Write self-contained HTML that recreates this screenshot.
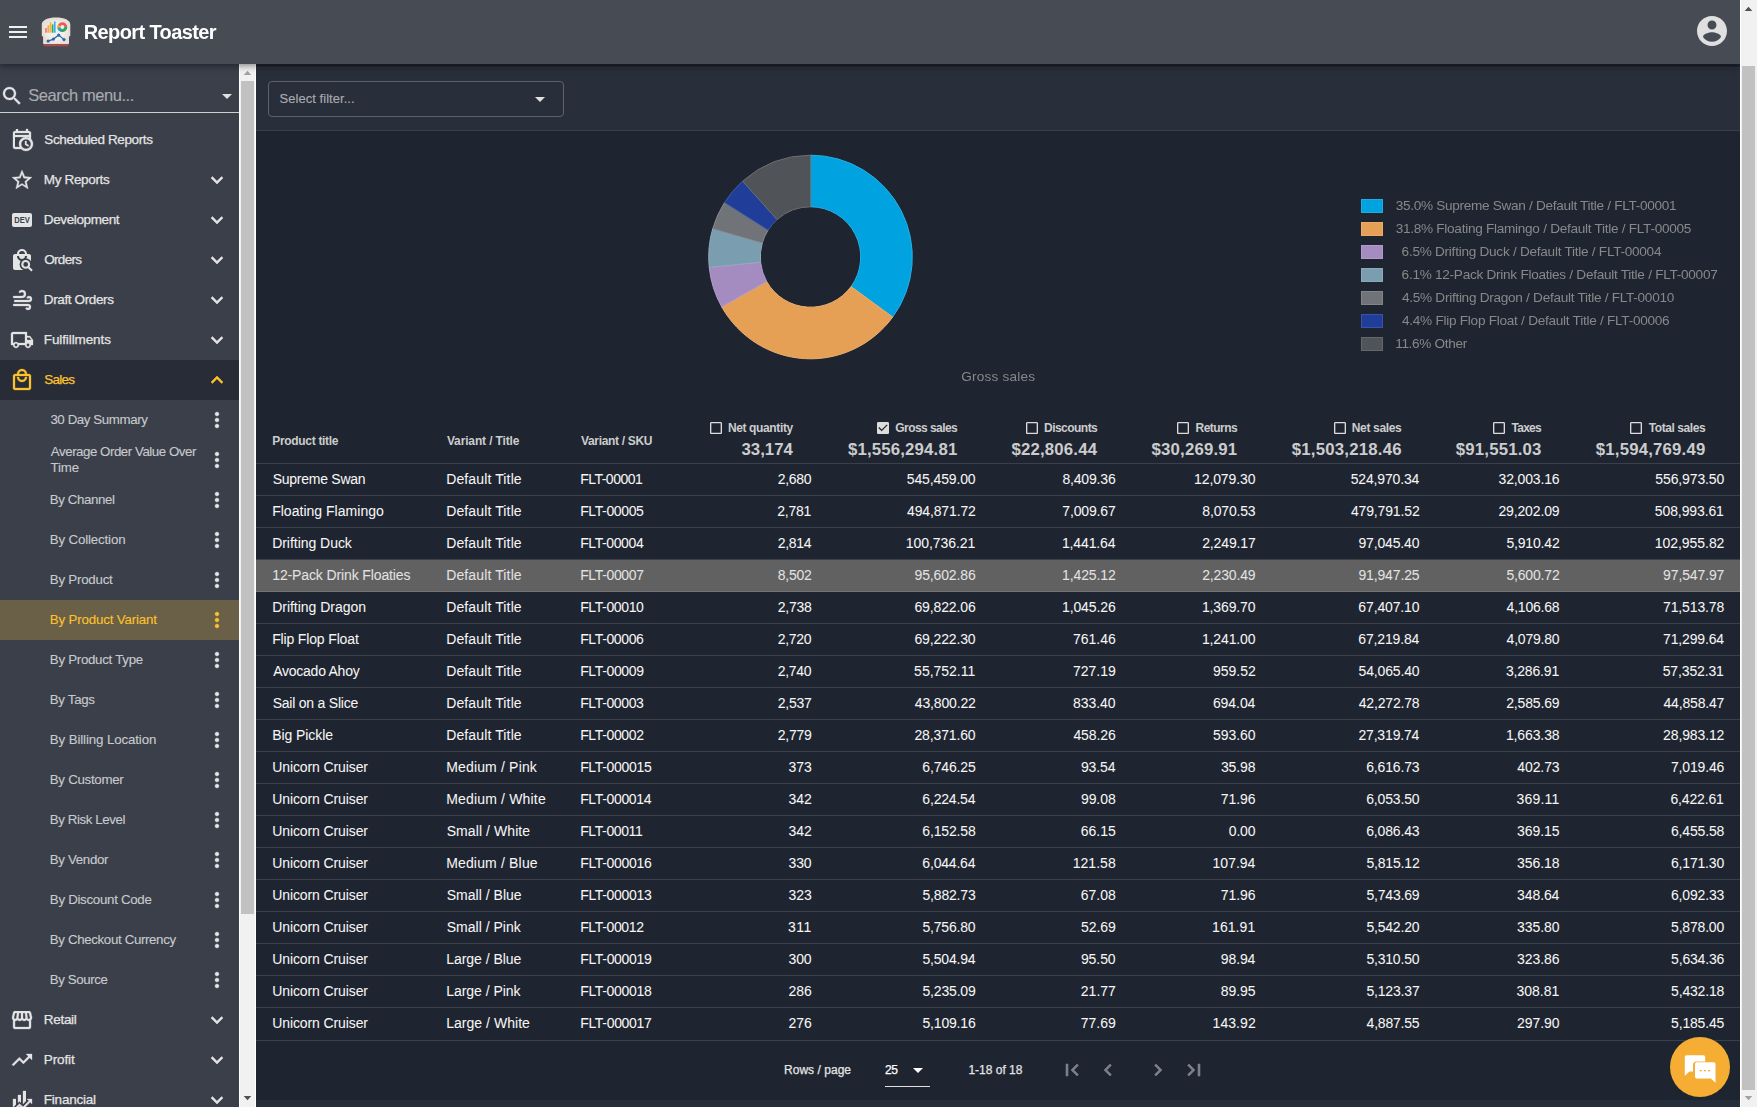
<!DOCTYPE html>
<html lang="en"><head><meta charset="utf-8"><title>Report Toaster</title>
<style>
*{box-sizing:border-box}
html,body{margin:0;padding:0}
body{width:1757px;height:1107px;overflow:hidden;background:#1f2530;font-family:"Liberation Sans",Arial,sans-serif;position:relative}
.a{position:absolute}
.ic{position:absolute;display:block;overflow:visible}
.t{position:absolute;white-space:pre;line-height:20px;-webkit-text-stroke:0.25px}
.c{-webkit-text-stroke:0.04px}
.b{-webkit-text-stroke:0}
.s{-webkit-text-stroke:0.12px}
.g{transform:translateZ(0);-webkit-text-stroke:0}
.hdr{left:0;top:0;width:1740px;height:64px;background:#474b54;box-shadow:0 2px 4px -1px rgba(0,0,0,.2),0 4px 5px 0 rgba(0,0,0,.14),0 1px 10px 0 rgba(0,0,0,.12)}
.sidebar{left:0;top:64px;width:239px;height:1043px;background:#3a3f4a;overflow:hidden}
.sbin{left:0;top:-64px;width:239px;height:1107px}
</style></head><body>
<div class="a" style="left:256px;top:67px;width:1484px;height:63px;background:#292e3b"></div>
<div class="a" style="left:256px;top:130px;width:1484px;height:1px;background:#393e49;"></div>
<div class="a" style="left:256px;top:67px;width:1484px;height:1px;background:#2e333f;"></div>
<div class="a" style="left:268px;top:81px;width:296px;height:36px;border:1px solid #5d616b;border-radius:4px"></div>
<span class="t s" style="left:279.61px;top:88.90px;font-size:13px;letter-spacing:0.037px;color:#a9abb0;">Select filter...</span>
<svg class="ic" style="left:528px;top:87px;width:24px;height:24px" viewBox="0 0 24 24"><path fill="#e0e0e0" d="M7 10l5 5 5-5z"/></svg>
<svg class="ic" style="left:700px;top:150px;width:220px;height:220px" viewBox="700 150 220 220"><path fill="#00a2e0" stroke="#28b0e4" stroke-width="1" stroke-linejoin="bevel" d="M810.50 155.20A101.8 101.8 0 0 1 892.73 317.02L851.05 286.60A50.2 50.2 0 0 0 810.50 206.80Z"/><path fill="#e5a055" stroke="#e9af70" stroke-width="1" stroke-linejoin="bevel" d="M892.73 317.02A101.8 101.8 0 0 1 721.71 306.79L766.71 281.55A50.2 50.2 0 0 0 851.05 286.60Z"/><path fill="#a58cc0" stroke="#b39eca" stroke-width="1" stroke-linejoin="bevel" d="M721.71 306.79A101.8 101.8 0 0 1 709.23 267.39L760.56 262.12A50.2 50.2 0 0 0 766.71 281.55Z"/><path fill="#7a9eb0" stroke="#8fadbc" stroke-width="1" stroke-linejoin="bevel" d="M709.23 267.39A101.8 101.8 0 0 1 712.71 228.72L762.28 243.06A50.2 50.2 0 0 0 760.56 262.12Z"/><path fill="#707478" stroke="#868a8d" stroke-width="1" stroke-linejoin="bevel" d="M712.71 228.72A101.8 101.8 0 0 1 724.49 202.54L768.09 230.14A50.2 50.2 0 0 0 762.28 243.06Z"/><path fill="#1f3d99" stroke="#425ca9" stroke-width="1" stroke-linejoin="bevel" d="M724.49 202.54A101.8 101.8 0 0 1 742.64 181.11L777.04 219.58A50.2 50.2 0 0 0 768.09 230.14Z"/><path fill="#505358" stroke="#6c6e72" stroke-width="1" stroke-linejoin="bevel" d="M742.64 181.11A101.8 101.8 0 0 1 810.50 155.20L810.50 206.80A50.2 50.2 0 0 0 777.04 219.58Z"/></svg>
<span class="t g" style="left:961.22px;top:366.60px;font-size:13.6px;letter-spacing:0.201px;color:#878889;">Gross sales</span>
<div class="a" style="left:1361.4px;top:199px;width:21.6px;height:14px;background:#00a2e0;border:1px solid rgba(255,255,255,.12)"></div><span class="t g" style="left:1395.68px;top:195.90px;font-size:13.6px;letter-spacing:-0.302px;color:#878889;">35.0% Supreme Swan / Default Title / FLT-00001</span><div class="a" style="left:1361.4px;top:222px;width:21.6px;height:14px;background:#e5a055;border:1px solid rgba(255,255,255,.12)"></div><span class="t g" style="left:1395.68px;top:218.90px;font-size:13.6px;letter-spacing:-0.278px;color:#878889;">31.8% Floating Flamingo / Default Title / FLT-00005</span><div class="a" style="left:1361.4px;top:245px;width:21.6px;height:14px;background:#a58cc0;border:1px solid rgba(255,255,255,.12)"></div><span class="t g" style="left:1401.61px;top:241.90px;font-size:13.6px;letter-spacing:-0.264px;color:#878889;">6.5% Drifting Duck / Default Title / FLT-00004</span><div class="a" style="left:1361.4px;top:268px;width:21.6px;height:14px;background:#7a9eb0;border:1px solid rgba(255,255,255,.12)"></div><span class="t g" style="left:1401.61px;top:264.90px;font-size:13.6px;letter-spacing:-0.269px;color:#878889;">6.1% 12-Pack Drink Floaties / Default Title / FLT-00007</span><div class="a" style="left:1361.4px;top:291px;width:21.6px;height:14px;background:#707478;border:1px solid rgba(255,255,255,.12)"></div><span class="t g" style="left:1401.99px;top:287.90px;font-size:13.6px;letter-spacing:-0.278px;color:#878889;">4.5% Drifting Dragon / Default Title / FLT-00010</span><div class="a" style="left:1361.4px;top:314px;width:21.6px;height:14px;background:#1f3d99;border:1px solid rgba(255,255,255,.12)"></div><span class="t g" style="left:1401.99px;top:310.90px;font-size:13.6px;letter-spacing:-0.264px;color:#878889;">4.4% Flip Flop Float / Default Title / FLT-00006</span><div class="a" style="left:1361.4px;top:337px;width:21.6px;height:14px;background:#505358;border:1px solid rgba(255,255,255,.12)"></div><span class="t g" style="left:1395.16px;top:333.90px;font-size:13.6px;letter-spacing:-0.325px;color:#878889;">11.6% Other</span>
<span class="t b" style="left:272.20px;top:431.00px;font-size:12px;letter-spacing:-0.307px;font-weight:bold;color:#cbcccd;">Product title</span><span class="t b" style="left:446.92px;top:431.00px;font-size:12px;letter-spacing:-0.141px;font-weight:bold;color:#cbcccd;">Variant / Title</span><span class="t b" style="left:580.92px;top:431.00px;font-size:12px;letter-spacing:-0.320px;font-weight:bold;color:#cbcccd;">Variant / SKU</span><svg class="ic" style="left:707.8px;top:420px;width:16px;height:16px" viewBox="0 0 24 24"><path fill="#dcdcdc" d="M19 5v14H5V5h14m0-2H5c-1.1 0-2 .9-2 2v14c0 1.1.9 2 2 2h14c1.1 0 2-.9 2-2V5c0-1.1-.9-2-2-2z"/></svg><span class="t b" style="left:727.90px;top:418.00px;font-size:12px;letter-spacing:-0.361px;font-weight:bold;color:#cbcccd;">Net quantity</span><span class="t b" style="left:741.41px;top:439.60px;font-size:16.8px;letter-spacing:0.030px;font-weight:bold;color:#cbcccd;">33,174</span><svg class="ic" style="left:874.9px;top:420px;width:16px;height:16px" viewBox="0 0 24 24"><path fill="#dcdcdc" d="M19 3H5c-1.11 0-2 .9-2 2v14c0 1.1.89 2 2 2h14c1.11 0 2-.9 2-2V5c0-1.1-.89-2-2-2zm-9 14l-5-5 1.41-1.41L10 14.17l7.59-7.59L19 8l-9 9z"/></svg><span class="t b" style="left:895.31px;top:418.00px;font-size:12px;letter-spacing:-0.566px;font-weight:bold;color:#cbcccd;">Gross sales</span><span class="t b" style="left:847.98px;top:439.60px;font-size:16.8px;letter-spacing:0.164px;font-weight:bold;color:#cbcccd;">$1,556,294.81</span><svg class="ic" style="left:1023.9px;top:420px;width:16px;height:16px" viewBox="0 0 24 24"><path fill="#dcdcdc" d="M19 5v14H5V5h14m0-2H5c-1.1 0-2 .9-2 2v14c0 1.1.9 2 2 2h14c1.1 0 2-.9 2-2V5c0-1.1-.9-2-2-2z"/></svg><span class="t b" style="left:1044.00px;top:418.00px;font-size:12px;letter-spacing:-0.527px;font-weight:bold;color:#cbcccd;">Discounts</span><span class="t b" style="left:1011.48px;top:439.60px;font-size:16.8px;letter-spacing:0.169px;font-weight:bold;color:#cbcccd;">$22,806.44</span><svg class="ic" style="left:1175.4px;top:420px;width:16px;height:16px" viewBox="0 0 24 24"><path fill="#dcdcdc" d="M19 5v14H5V5h14m0-2H5c-1.1 0-2 .9-2 2v14c0 1.1.9 2 2 2h14c1.1 0 2-.9 2-2V5c0-1.1-.9-2-2-2z"/></svg><span class="t b" style="left:1195.50px;top:418.00px;font-size:12px;letter-spacing:-0.541px;font-weight:bold;color:#cbcccd;">Returns</span><span class="t b" style="left:1151.48px;top:439.60px;font-size:16.8px;letter-spacing:0.189px;font-weight:bold;color:#cbcccd;">$30,269.91</span><svg class="ic" style="left:1331.7px;top:420px;width:16px;height:16px" viewBox="0 0 24 24"><path fill="#dcdcdc" d="M19 5v14H5V5h14m0-2H5c-1.1 0-2 .9-2 2v14c0 1.1.9 2 2 2h14c1.1 0 2-.9 2-2V5c0-1.1-.9-2-2-2z"/></svg><span class="t b" style="left:1351.80px;top:418.00px;font-size:12px;letter-spacing:-0.338px;font-weight:bold;color:#cbcccd;">Net sales</span><span class="t b" style="left:1291.78px;top:439.60px;font-size:16.8px;letter-spacing:0.201px;font-weight:bold;color:#cbcccd;">$1,503,218.46</span><svg class="ic" style="left:1490.7px;top:420px;width:16px;height:16px" viewBox="0 0 24 24"><path fill="#dcdcdc" d="M19 5v14H5V5h14m0-2H5c-1.1 0-2 .9-2 2v14c0 1.1.9 2 2 2h14c1.1 0 2-.9 2-2V5c0-1.1-.9-2-2-2z"/></svg><span class="t b" style="left:1511.47px;top:418.00px;font-size:12px;letter-spacing:-0.727px;font-weight:bold;color:#cbcccd;">Taxes</span><span class="t b" style="left:1455.78px;top:439.60px;font-size:16.8px;letter-spacing:0.182px;font-weight:bold;color:#cbcccd;">$91,551.03</span><svg class="ic" style="left:1628.1px;top:420px;width:16px;height:16px" viewBox="0 0 24 24"><path fill="#dcdcdc" d="M19 5v14H5V5h14m0-2H5c-1.1 0-2 .9-2 2v14c0 1.1.9 2 2 2h14c1.1 0 2-.9 2-2V5c0-1.1-.9-2-2-2z"/></svg><span class="t b" style="left:1648.87px;top:418.00px;font-size:12px;letter-spacing:-0.441px;font-weight:bold;color:#cbcccd;">Total sales</span><span class="t b" style="left:1595.78px;top:439.60px;font-size:16.8px;letter-spacing:0.186px;font-weight:bold;color:#cbcccd;">$1,594,769.49</span><div class="a" style="left:256px;top:463px;width:1484px;height:1px;background:rgba(255,255,255,.12);"></div><span class="t c" style="left:272.66px;top:468.60px;font-size:14px;letter-spacing:-0.252px;color:#f6f6f6;">Supreme Swan</span><span class="t c" style="left:446.15px;top:468.60px;font-size:14px;letter-spacing:0.133px;color:#f6f6f6;">Default Title</span><span class="t c" style="left:580.15px;top:468.60px;font-size:14px;letter-spacing:-0.505px;color:#f6f6f6;">FLT-00001</span><span class="t c" style="left:777.75px;top:468.60px;font-size:14px;letter-spacing:-0.285px;color:#f6f6f6;">2,680</span><span class="t c" style="left:906.76px;top:468.60px;font-size:14px;letter-spacing:-0.131px;color:#f6f6f6;">545,459.00</span><span class="t c" style="left:1062.43px;top:468.60px;font-size:14px;letter-spacing:-0.174px;color:#f6f6f6;">8,409.36</span><span class="t c" style="left:1194.01px;top:468.60px;font-size:14px;letter-spacing:-0.094px;color:#f6f6f6;">12,079.30</span><span class="t c" style="left:1350.66px;top:468.60px;font-size:14px;letter-spacing:-0.146px;color:#f6f6f6;">524,970.34</span><span class="t c" style="left:1498.55px;top:468.60px;font-size:14px;letter-spacing:-0.152px;color:#f6f6f6;">32,003.16</span><span class="t c" style="left:1655.36px;top:468.60px;font-size:14px;letter-spacing:-0.131px;color:#f6f6f6;">556,973.50</span><div class="a" style="left:256px;top:495px;width:1484px;height:1px;background:rgba(255,255,255,.12);"></div><span class="t c" style="left:272.15px;top:500.60px;font-size:14px;letter-spacing:0.023px;color:#f6f6f6;">Floating Flamingo</span><span class="t c" style="left:446.15px;top:500.60px;font-size:14px;letter-spacing:0.133px;color:#f6f6f6;">Default Title</span><span class="t c" style="left:580.15px;top:500.60px;font-size:14px;letter-spacing:-0.367px;color:#f6f6f6;">FLT-00005</span><span class="t c" style="left:777.25px;top:500.60px;font-size:14px;letter-spacing:-0.251px;color:#f6f6f6;">2,781</span><span class="t c" style="left:907.00px;top:500.60px;font-size:14px;letter-spacing:-0.140px;color:#f6f6f6;">494,871.72</span><span class="t c" style="left:1062.32px;top:500.60px;font-size:14px;letter-spacing:-0.145px;color:#f6f6f6;">7,009.67</span><span class="t c" style="left:1202.33px;top:500.60px;font-size:14px;letter-spacing:-0.174px;color:#f6f6f6;">8,070.53</span><span class="t c" style="left:1350.90px;top:500.60px;font-size:14px;letter-spacing:-0.140px;color:#f6f6f6;">479,791.52</span><span class="t c" style="left:1498.38px;top:500.60px;font-size:14px;letter-spacing:-0.125px;color:#f6f6f6;">29,202.09</span><span class="t c" style="left:1654.86px;top:500.60px;font-size:14px;letter-spacing:-0.116px;color:#f6f6f6;">508,993.61</span><div class="a" style="left:256px;top:527px;width:1484px;height:1px;background:rgba(255,255,255,.12);"></div><span class="t c" style="left:272.15px;top:532.60px;font-size:14px;letter-spacing:-0.034px;color:#f6f6f6;">Drifting Duck</span><span class="t c" style="left:446.15px;top:532.60px;font-size:14px;letter-spacing:0.133px;color:#f6f6f6;">Default Title</span><span class="t c" style="left:580.15px;top:532.60px;font-size:14px;letter-spacing:-0.389px;color:#f6f6f6;">FLT-00004</span><span class="t c" style="left:777.75px;top:532.60px;font-size:14px;letter-spacing:-0.319px;color:#f6f6f6;">2,814</span><span class="t c" style="left:905.75px;top:532.60px;font-size:14px;letter-spacing:-0.060px;color:#f6f6f6;">100,736.21</span><span class="t c" style="left:1061.98px;top:532.60px;font-size:14px;letter-spacing:-0.137px;color:#f6f6f6;">1,441.64</span><span class="t c" style="left:1202.24px;top:532.60px;font-size:14px;letter-spacing:-0.147px;color:#f6f6f6;">2,249.17</span><span class="t c" style="left:1358.42px;top:532.60px;font-size:14px;letter-spacing:-0.145px;color:#f6f6f6;">97,045.40</span><span class="t c" style="left:1506.38px;top:532.60px;font-size:14px;letter-spacing:-0.168px;color:#f6f6f6;">5,910.42</span><span class="t c" style="left:1654.85px;top:532.60px;font-size:14px;letter-spacing:-0.058px;color:#f6f6f6;">102,955.82</span><div class="a" style="left:256px;top:560px;width:1484px;height:32px;background:#616161;"></div><div class="a" style="left:256px;top:559px;width:1484px;height:1px;background:rgba(255,255,255,.12);"></div><span class="t c" style="left:272.23px;top:564.60px;font-size:14px;letter-spacing:-0.122px;color:#e2e2e2;">12-Pack Drink Floaties</span><span class="t c" style="left:446.15px;top:564.60px;font-size:14px;letter-spacing:0.133px;color:#e2e2e2;">Default Title</span><span class="t c" style="left:580.15px;top:564.60px;font-size:14px;letter-spacing:-0.352px;color:#e2e2e2;">FLT-00007</span><span class="t c" style="left:777.85px;top:564.60px;font-size:14px;letter-spacing:-0.269px;color:#e2e2e2;">8,502</span><span class="t c" style="left:914.52px;top:564.60px;font-size:14px;letter-spacing:-0.136px;color:#e2e2e2;">95,602.86</span><span class="t c" style="left:1061.98px;top:564.60px;font-size:14px;letter-spacing:-0.095px;color:#e2e2e2;">1,425.12</span><span class="t c" style="left:1202.24px;top:564.60px;font-size:14px;letter-spacing:-0.153px;color:#e2e2e2;">2,230.49</span><span class="t c" style="left:1358.42px;top:564.60px;font-size:14px;letter-spacing:-0.140px;color:#e2e2e2;">91,947.25</span><span class="t c" style="left:1506.38px;top:564.60px;font-size:14px;letter-spacing:-0.168px;color:#e2e2e2;">5,600.72</span><span class="t c" style="left:1663.12px;top:564.60px;font-size:14px;letter-spacing:-0.125px;color:#e2e2e2;">97,547.97</span><div class="a" style="left:256px;top:591px;width:1484px;height:1px;background:rgba(255,255,255,.12);"></div><span class="t c" style="left:272.15px;top:596.60px;font-size:14px;letter-spacing:-0.014px;color:#f6f6f6;">Drifting Dragon</span><span class="t c" style="left:446.15px;top:596.60px;font-size:14px;letter-spacing:0.133px;color:#f6f6f6;">Default Title</span><span class="t c" style="left:580.15px;top:596.60px;font-size:14px;letter-spacing:-0.372px;color:#f6f6f6;">FLT-00010</span><span class="t c" style="left:777.75px;top:596.60px;font-size:14px;letter-spacing:-0.269px;color:#f6f6f6;">2,738</span><span class="t c" style="left:914.47px;top:596.60px;font-size:14px;letter-spacing:-0.130px;color:#f6f6f6;">69,822.06</span><span class="t c" style="left:1061.98px;top:596.60px;font-size:14px;letter-spacing:-0.108px;color:#f6f6f6;">1,045.26</span><span class="t c" style="left:1201.88px;top:596.60px;font-size:14px;letter-spacing:-0.118px;color:#f6f6f6;">1,369.70</span><span class="t c" style="left:1358.37px;top:596.60px;font-size:14px;letter-spacing:-0.138px;color:#f6f6f6;">67,407.10</span><span class="t c" style="left:1506.62px;top:596.60px;font-size:14px;letter-spacing:-0.216px;color:#f6f6f6;">4,106.68</span><span class="t c" style="left:1663.06px;top:596.60px;font-size:14px;letter-spacing:-0.130px;color:#f6f6f6;">71,513.78</span><div class="a" style="left:256px;top:623px;width:1484px;height:1px;background:rgba(255,255,255,.12);"></div><span class="t c" style="left:272.15px;top:628.60px;font-size:14px;letter-spacing:-0.146px;color:#f6f6f6;">Flip Flop Float</span><span class="t c" style="left:446.15px;top:628.60px;font-size:14px;letter-spacing:0.133px;color:#f6f6f6;">Default Title</span><span class="t c" style="left:580.15px;top:628.60px;font-size:14px;letter-spacing:-0.363px;color:#f6f6f6;">FLT-00006</span><span class="t c" style="left:777.75px;top:628.60px;font-size:14px;letter-spacing:-0.285px;color:#f6f6f6;">2,720</span><span class="t c" style="left:914.47px;top:628.60px;font-size:14px;letter-spacing:-0.138px;color:#f6f6f6;">69,222.30</span><span class="t c" style="left:1072.99px;top:628.60px;font-size:14px;letter-spacing:-0.018px;color:#f6f6f6;">761.46</span><span class="t c" style="left:1201.88px;top:628.60px;font-size:14px;letter-spacing:-0.118px;color:#f6f6f6;">1,241.00</span><span class="t c" style="left:1358.37px;top:628.60px;font-size:14px;letter-spacing:-0.155px;color:#f6f6f6;">67,219.84</span><span class="t c" style="left:1506.62px;top:628.60px;font-size:14px;letter-spacing:-0.224px;color:#f6f6f6;">4,079.80</span><span class="t c" style="left:1663.06px;top:628.60px;font-size:14px;letter-spacing:-0.154px;color:#f6f6f6;">71,299.64</span><div class="a" style="left:256px;top:655px;width:1484px;height:1px;background:rgba(255,255,255,.12);"></div><span class="t c" style="left:273.27px;top:660.60px;font-size:14px;letter-spacing:-0.261px;color:#f6f6f6;">Avocado Ahoy</span><span class="t c" style="left:446.15px;top:660.60px;font-size:14px;letter-spacing:0.133px;color:#f6f6f6;">Default Title</span><span class="t c" style="left:580.15px;top:660.60px;font-size:14px;letter-spacing:-0.357px;color:#f6f6f6;">FLT-00009</span><span class="t c" style="left:777.75px;top:660.60px;font-size:14px;letter-spacing:-0.285px;color:#f6f6f6;">2,740</span><span class="t c" style="left:914.12px;top:660.60px;font-size:14px;letter-spacing:-0.010px;color:#f6f6f6;">55,752.11</span><span class="t c" style="left:1072.99px;top:660.60px;font-size:14px;letter-spacing:-0.009px;color:#f6f6f6;">727.19</span><span class="t c" style="left:1212.95px;top:660.60px;font-size:14px;letter-spacing:-0.013px;color:#f6f6f6;">959.52</span><span class="t c" style="left:1358.52px;top:660.60px;font-size:14px;letter-spacing:-0.157px;color:#f6f6f6;">54,065.40</span><span class="t c" style="left:1505.91px;top:660.60px;font-size:14px;letter-spacing:-0.174px;color:#f6f6f6;">3,286.91</span><span class="t c" style="left:1662.72px;top:660.60px;font-size:14px;letter-spacing:-0.140px;color:#f6f6f6;">57,352.31</span><div class="a" style="left:256px;top:687px;width:1484px;height:1px;background:rgba(255,255,255,.12);"></div><span class="t c" style="left:272.66px;top:692.60px;font-size:14px;letter-spacing:-0.218px;color:#f6f6f6;">Sail on a Slice</span><span class="t c" style="left:446.15px;top:692.60px;font-size:14px;letter-spacing:0.133px;color:#f6f6f6;">Default Title</span><span class="t c" style="left:580.15px;top:692.60px;font-size:14px;letter-spacing:-0.363px;color:#f6f6f6;">FLT-00003</span><span class="t c" style="left:777.75px;top:692.60px;font-size:14px;letter-spacing:-0.245px;color:#f6f6f6;">2,537</span><span class="t c" style="left:914.86px;top:692.60px;font-size:14px;letter-spacing:-0.167px;color:#f6f6f6;">43,800.22</span><span class="t c" style="left:1073.09px;top:692.60px;font-size:14px;letter-spacing:-0.054px;color:#f6f6f6;">833.40</span><span class="t c" style="left:1212.89px;top:692.60px;font-size:14px;letter-spacing:-0.060px;color:#f6f6f6;">694.04</span><span class="t c" style="left:1358.76px;top:692.60px;font-size:14px;letter-spacing:-0.179px;color:#f6f6f6;">42,272.78</span><span class="t c" style="left:1506.24px;top:692.60px;font-size:14px;letter-spacing:-0.153px;color:#f6f6f6;">2,585.69</span><span class="t c" style="left:1663.46px;top:692.60px;font-size:14px;letter-spacing:-0.167px;color:#f6f6f6;">44,858.47</span><div class="a" style="left:256px;top:719px;width:1484px;height:1px;background:rgba(255,255,255,.12);"></div><span class="t c" style="left:272.15px;top:724.60px;font-size:14px;letter-spacing:-0.066px;color:#f6f6f6;">Big Pickle</span><span class="t c" style="left:446.15px;top:724.60px;font-size:14px;letter-spacing:0.133px;color:#f6f6f6;">Default Title</span><span class="t c" style="left:580.15px;top:724.60px;font-size:14px;letter-spacing:-0.352px;color:#f6f6f6;">FLT-00002</span><span class="t c" style="left:777.75px;top:724.60px;font-size:14px;letter-spacing:-0.256px;color:#f6f6f6;">2,779</span><span class="t c" style="left:914.48px;top:724.60px;font-size:14px;letter-spacing:-0.139px;color:#f6f6f6;">28,371.60</span><span class="t c" style="left:1073.38px;top:724.60px;font-size:14px;letter-spacing:-0.097px;color:#f6f6f6;">458.26</span><span class="t c" style="left:1213.04px;top:724.60px;font-size:14px;letter-spacing:-0.063px;color:#f6f6f6;">593.60</span><span class="t c" style="left:1358.38px;top:724.60px;font-size:14px;letter-spacing:-0.156px;color:#f6f6f6;">27,319.74</span><span class="t c" style="left:1505.88px;top:724.60px;font-size:14px;letter-spacing:-0.109px;color:#f6f6f6;">1,663.38</span><span class="t c" style="left:1663.08px;top:724.60px;font-size:14px;letter-spacing:-0.119px;color:#f6f6f6;">28,983.12</span><div class="a" style="left:256px;top:751px;width:1484px;height:1px;background:rgba(255,255,255,.12);"></div><span class="t c" style="left:272.22px;top:756.60px;font-size:14px;letter-spacing:-0.103px;color:#f6f6f6;">Unicorn Cruiser</span><span class="t c" style="left:446.15px;top:756.60px;font-size:14px;letter-spacing:0.169px;color:#f6f6f6;">Medium / Pink</span><span class="t c" style="left:580.15px;top:756.60px;font-size:14px;letter-spacing:-0.318px;color:#f6f6f6;">FLT-000015</span><span class="t c" style="left:788.58px;top:756.60px;font-size:14px;letter-spacing:-0.113px;color:#f6f6f6;">373</span><span class="t c" style="left:922.33px;top:756.60px;font-size:14px;letter-spacing:-0.163px;color:#f6f6f6;">6,746.25</span><span class="t c" style="left:1080.91px;top:756.60px;font-size:14px;letter-spacing:-0.108px;color:#f6f6f6;">93.54</span><span class="t c" style="left:1220.93px;top:756.60px;font-size:14px;letter-spacing:-0.089px;color:#f6f6f6;">35.98</span><span class="t c" style="left:1366.23px;top:756.60px;font-size:14px;letter-spacing:-0.159px;color:#f6f6f6;">6,616.73</span><span class="t c" style="left:1517.28px;top:756.60px;font-size:14px;letter-spacing:-0.097px;color:#f6f6f6;">402.73</span><span class="t c" style="left:1670.92px;top:756.60px;font-size:14px;letter-spacing:-0.158px;color:#f6f6f6;">7,019.46</span><div class="a" style="left:256px;top:783px;width:1484px;height:1px;background:rgba(255,255,255,.12);"></div><span class="t c" style="left:272.22px;top:788.60px;font-size:14px;letter-spacing:-0.103px;color:#f6f6f6;">Unicorn Cruiser</span><span class="t c" style="left:446.15px;top:788.60px;font-size:14px;letter-spacing:0.179px;color:#f6f6f6;">Medium / White</span><span class="t c" style="left:580.15px;top:788.60px;font-size:14px;letter-spacing:-0.338px;color:#f6f6f6;">FLT-000014</span><span class="t c" style="left:788.58px;top:788.60px;font-size:14px;letter-spacing:-0.069px;color:#f6f6f6;">342</span><span class="t c" style="left:922.33px;top:788.60px;font-size:14px;letter-spacing:-0.188px;color:#f6f6f6;">6,224.54</span><span class="t c" style="left:1080.91px;top:788.60px;font-size:14px;letter-spacing:-0.058px;color:#f6f6f6;">99.08</span><span class="t c" style="left:1220.75px;top:788.60px;font-size:14px;letter-spacing:-0.041px;color:#f6f6f6;">71.96</span><span class="t c" style="left:1366.23px;top:788.60px;font-size:14px;letter-spacing:-0.169px;color:#f6f6f6;">6,053.50</span><span class="t c" style="left:1516.57px;top:788.60px;font-size:14px;letter-spacing:0.166px;color:#f6f6f6;">369.11</span><span class="t c" style="left:1670.43px;top:788.60px;font-size:14px;letter-spacing:-0.149px;color:#f6f6f6;">6,422.61</span><div class="a" style="left:256px;top:815px;width:1484px;height:1px;background:rgba(255,255,255,.12);"></div><span class="t c" style="left:272.22px;top:820.60px;font-size:14px;letter-spacing:-0.103px;color:#f6f6f6;">Unicorn Cruiser</span><span class="t c" style="left:446.66px;top:820.60px;font-size:14px;letter-spacing:0.083px;color:#f6f6f6;">Small / White</span><span class="t c" style="left:580.15px;top:820.60px;font-size:14px;letter-spacing:-0.375px;color:#f6f6f6;">FLT-00011</span><span class="t c" style="left:788.58px;top:820.60px;font-size:14px;letter-spacing:-0.069px;color:#f6f6f6;">342</span><span class="t c" style="left:922.33px;top:820.60px;font-size:14px;letter-spacing:-0.160px;color:#f6f6f6;">6,152.58</span><span class="t c" style="left:1080.85px;top:820.60px;font-size:14px;letter-spacing:-0.050px;color:#f6f6f6;">66.15</span><span class="t c" style="left:1228.78px;top:820.60px;font-size:14px;letter-spacing:-0.160px;color:#f6f6f6;">0.00</span><span class="t c" style="left:1366.23px;top:820.60px;font-size:14px;letter-spacing:-0.159px;color:#f6f6f6;">6,086.43</span><span class="t c" style="left:1517.07px;top:820.60px;font-size:14px;letter-spacing:-0.060px;color:#f6f6f6;">369.15</span><span class="t c" style="left:1670.93px;top:820.60px;font-size:14px;letter-spacing:-0.160px;color:#f6f6f6;">6,455.58</span><div class="a" style="left:256px;top:847px;width:1484px;height:1px;background:rgba(255,255,255,.12);"></div><span class="t c" style="left:272.22px;top:852.60px;font-size:14px;letter-spacing:-0.103px;color:#f6f6f6;">Unicorn Cruiser</span><span class="t c" style="left:446.15px;top:852.60px;font-size:14px;letter-spacing:0.166px;color:#f6f6f6;">Medium / Blue</span><span class="t c" style="left:580.15px;top:852.60px;font-size:14px;letter-spacing:-0.315px;color:#f6f6f6;">FLT-000016</span><span class="t c" style="left:788.58px;top:852.60px;font-size:14px;letter-spacing:-0.148px;color:#f6f6f6;">330</span><span class="t c" style="left:922.33px;top:852.60px;font-size:14px;letter-spacing:-0.188px;color:#f6f6f6;">6,044.64</span><span class="t c" style="left:1072.64px;top:852.60px;font-size:14px;letter-spacing:0.050px;color:#f6f6f6;">121.58</span><span class="t c" style="left:1212.54px;top:852.60px;font-size:14px;letter-spacing:0.011px;color:#f6f6f6;">107.94</span><span class="t c" style="left:1366.38px;top:852.60px;font-size:14px;letter-spacing:-0.168px;color:#f6f6f6;">5,815.12</span><span class="t c" style="left:1517.07px;top:852.60px;font-size:14px;letter-spacing:-0.056px;color:#f6f6f6;">356.18</span><span class="t c" style="left:1670.93px;top:852.60px;font-size:14px;letter-spacing:-0.169px;color:#f6f6f6;">6,171.30</span><div class="a" style="left:256px;top:879px;width:1484px;height:1px;background:rgba(255,255,255,.12);"></div><span class="t c" style="left:272.22px;top:884.60px;font-size:14px;letter-spacing:-0.103px;color:#f6f6f6;">Unicorn Cruiser</span><span class="t c" style="left:446.66px;top:884.60px;font-size:14px;letter-spacing:0.024px;color:#f6f6f6;">Small / Blue</span><span class="t c" style="left:580.15px;top:884.60px;font-size:14px;letter-spacing:-0.315px;color:#f6f6f6;">FLT-000013</span><span class="t c" style="left:788.58px;top:884.60px;font-size:14px;letter-spacing:-0.113px;color:#f6f6f6;">323</span><span class="t c" style="left:922.48px;top:884.60px;font-size:14px;letter-spacing:-0.180px;color:#f6f6f6;">5,882.73</span><span class="t c" style="left:1080.85px;top:884.60px;font-size:14px;letter-spacing:-0.045px;color:#f6f6f6;">67.08</span><span class="t c" style="left:1220.75px;top:884.60px;font-size:14px;letter-spacing:-0.041px;color:#f6f6f6;">71.96</span><span class="t c" style="left:1366.38px;top:884.60px;font-size:14px;letter-spacing:-0.174px;color:#f6f6f6;">5,743.69</span><span class="t c" style="left:1517.07px;top:884.60px;font-size:14px;letter-spacing:-0.096px;color:#f6f6f6;">348.64</span><span class="t c" style="left:1670.93px;top:884.60px;font-size:14px;letter-spacing:-0.159px;color:#f6f6f6;">6,092.33</span><div class="a" style="left:256px;top:911px;width:1484px;height:1px;background:rgba(255,255,255,.12);"></div><span class="t c" style="left:272.22px;top:916.60px;font-size:14px;letter-spacing:-0.103px;color:#f6f6f6;">Unicorn Cruiser</span><span class="t c" style="left:446.66px;top:916.60px;font-size:14px;letter-spacing:0.019px;color:#f6f6f6;">Small / Pink</span><span class="t c" style="left:580.15px;top:916.60px;font-size:14px;letter-spacing:-0.352px;color:#f6f6f6;">FLT-00012</span><span class="t c" style="left:788.08px;top:916.60px;font-size:14px;letter-spacing:0.440px;color:#f6f6f6;">311</span><span class="t c" style="left:922.48px;top:916.60px;font-size:14px;letter-spacing:-0.190px;color:#f6f6f6;">5,756.80</span><span class="t c" style="left:1081.00px;top:916.60px;font-size:14px;letter-spacing:-0.069px;color:#f6f6f6;">52.69</span><span class="t c" style="left:1212.04px;top:916.60px;font-size:14px;letter-spacing:0.065px;color:#f6f6f6;">161.91</span><span class="t c" style="left:1366.38px;top:916.60px;font-size:14px;letter-spacing:-0.190px;color:#f6f6f6;">5,542.20</span><span class="t c" style="left:1517.07px;top:916.60px;font-size:14px;letter-spacing:-0.069px;color:#f6f6f6;">335.80</span><span class="t c" style="left:1671.08px;top:916.60px;font-size:14px;letter-spacing:-0.190px;color:#f6f6f6;">5,878.00</span><div class="a" style="left:256px;top:943px;width:1484px;height:1px;background:rgba(255,255,255,.12);"></div><span class="t c" style="left:272.22px;top:948.60px;font-size:14px;letter-spacing:-0.103px;color:#f6f6f6;">Unicorn Cruiser</span><span class="t c" style="left:446.15px;top:948.60px;font-size:14px;letter-spacing:-0.021px;color:#f6f6f6;">Large / Blue</span><span class="t c" style="left:580.15px;top:948.60px;font-size:14px;letter-spacing:-0.310px;color:#f6f6f6;">FLT-000019</span><span class="t c" style="left:788.58px;top:948.60px;font-size:14px;letter-spacing:-0.148px;color:#f6f6f6;">300</span><span class="t c" style="left:922.48px;top:948.60px;font-size:14px;letter-spacing:-0.210px;color:#f6f6f6;">5,504.94</span><span class="t c" style="left:1080.91px;top:948.60px;font-size:14px;letter-spacing:-0.074px;color:#f6f6f6;">95.50</span><span class="t c" style="left:1220.81px;top:948.60px;font-size:14px;letter-spacing:-0.108px;color:#f6f6f6;">98.94</span><span class="t c" style="left:1366.38px;top:948.60px;font-size:14px;letter-spacing:-0.190px;color:#f6f6f6;">5,310.50</span><span class="t c" style="left:1517.07px;top:948.60px;font-size:14px;letter-spacing:-0.055px;color:#f6f6f6;">323.86</span><span class="t c" style="left:1671.08px;top:948.60px;font-size:14px;letter-spacing:-0.180px;color:#f6f6f6;">5,634.36</span><div class="a" style="left:256px;top:975px;width:1484px;height:1px;background:rgba(255,255,255,.12);"></div><span class="t c" style="left:272.22px;top:980.60px;font-size:14px;letter-spacing:-0.103px;color:#f6f6f6;">Unicorn Cruiser</span><span class="t c" style="left:446.15px;top:980.60px;font-size:14px;letter-spacing:-0.026px;color:#f6f6f6;">Large / Pink</span><span class="t c" style="left:580.15px;top:980.60px;font-size:14px;letter-spacing:-0.316px;color:#f6f6f6;">FLT-000018</span><span class="t c" style="left:788.41px;top:980.60px;font-size:14px;letter-spacing:-0.028px;color:#f6f6f6;">286</span><span class="t c" style="left:922.48px;top:980.60px;font-size:14px;letter-spacing:-0.174px;color:#f6f6f6;">5,235.09</span><span class="t c" style="left:1080.86px;top:980.60px;font-size:14px;letter-spacing:-0.023px;color:#f6f6f6;">21.77</span><span class="t c" style="left:1220.86px;top:980.60px;font-size:14px;letter-spacing:-0.076px;color:#f6f6f6;">89.95</span><span class="t c" style="left:1366.38px;top:980.60px;font-size:14px;letter-spacing:-0.168px;color:#f6f6f6;">5,123.37</span><span class="t c" style="left:1516.57px;top:980.60px;font-size:14px;letter-spacing:-0.041px;color:#f6f6f6;">308.81</span><span class="t c" style="left:1671.08px;top:980.60px;font-size:14px;letter-spacing:-0.181px;color:#f6f6f6;">5,432.18</span><div class="a" style="left:256px;top:1007px;width:1484px;height:1px;background:rgba(255,255,255,.12);"></div><span class="t c" style="left:272.22px;top:1012.60px;font-size:14px;letter-spacing:-0.103px;color:#f6f6f6;">Unicorn Cruiser</span><span class="t c" style="left:446.15px;top:1012.60px;font-size:14px;letter-spacing:0.042px;color:#f6f6f6;">Large / White</span><span class="t c" style="left:580.15px;top:1012.60px;font-size:14px;letter-spacing:-0.305px;color:#f6f6f6;">FLT-000017</span><span class="t c" style="left:788.41px;top:1012.60px;font-size:14px;letter-spacing:-0.028px;color:#f6f6f6;">276</span><span class="t c" style="left:922.48px;top:1012.60px;font-size:14px;letter-spacing:-0.180px;color:#f6f6f6;">5,109.16</span><span class="t c" style="left:1080.85px;top:1012.60px;font-size:14px;letter-spacing:-0.029px;color:#f6f6f6;">77.69</span><span class="t c" style="left:1212.54px;top:1012.60px;font-size:14px;letter-spacing:0.069px;color:#f6f6f6;">143.92</span><span class="t c" style="left:1366.62px;top:1012.60px;font-size:14px;letter-spacing:-0.218px;color:#f6f6f6;">4,887.55</span><span class="t c" style="left:1516.90px;top:1012.60px;font-size:14px;letter-spacing:-0.035px;color:#f6f6f6;">297.90</span><span class="t c" style="left:1671.08px;top:1012.60px;font-size:14px;letter-spacing:-0.184px;color:#f6f6f6;">5,185.45</span><div class="a" style="left:256px;top:1040px;width:1484px;height:1px;background:rgba(255,255,255,.12);"></div>
<span class="t" style="left:784.02px;top:1060.00px;font-size:12px;letter-spacing:0.031px;color:#e4e4e4;">Rows / page</span>
<span class="t" style="left:885.00px;top:1060.00px;font-size:12px;letter-spacing:-0.340px;color:#ffffff;">25</span>
<svg class="ic" style="left:906px;top:1058px;width:24px;height:24px" viewBox="0 0 24 24"><path fill="#ffffff" d="M7 10l5 5 5-5z"/></svg>
<div class="a" style="left:884.7px;top:1086px;width:45.5px;height:1px;background:#e0e0e0;"></div>
<span class="t" style="left:968.39px;top:1060.00px;font-size:12px;color:#e4e4e4;">1-18 of 18</span>
<svg class="ic" style="left:1060.3px;top:1058px;width:24px;height:24px" viewBox="0 0 24 24"><path fill="#7c8189" stroke="#7c8189" stroke-width="0.6" d="M18.41 16.59L13.82 12l4.59-4.59L17 6l-6 6 6 6zM6 6h2v12H6z"/></svg>
<svg class="ic" style="left:1096.3px;top:1058px;width:24px;height:24px" viewBox="0 0 24 24"><path fill="#7c8189" stroke="#7c8189" stroke-width="0.6" d="M15.41 7.41L14 6l-6 6 6 6 1.41-1.41L10.83 12z"/></svg>
<svg class="ic" style="left:1145.8px;top:1058px;width:24px;height:24px" viewBox="0 0 24 24"><path fill="#7c8189" stroke="#7c8189" stroke-width="0.6" d="M10 6L8.59 7.41 13.17 12l-4.58 4.59L10 18l6-6z"/></svg>
<svg class="ic" style="left:1182px;top:1058px;width:24px;height:24px" viewBox="0 0 24 24"><path fill="#7c8189" stroke="#7c8189" stroke-width="0.6" d="M5.59 7.41L10.18 12l-4.59 4.59L7 18l6-6-6-6zM16 6h2v12h-2z"/></svg>
<div class="a" style="left:256px;top:1100px;width:1484px;height:7px;background:#252c3a;"></div>
<div class="a" style="left:1670px;top:1037px;width:60px;height:60px;border-radius:50%;background:#f5ae33"></div>
<svg class="ic" style="left:1682px;top:1052px;width:36px;height:32px" viewBox="0 0 36 32">
<path d="M4.500 3.300h17a1.700 1.700 0 0 1 1.700 1.700V9.500h-8.700a3.500 3.500 0 0 0-3.500 3.500V19.500H7.500L2.800 23.800V5A1.700 1.700 0 0 1 4.500 3.300z" fill="#fff"/>
<path d="M14.700 10.300h17.100a1.700 1.700 0 0 1 1.700 1.700v18.800L28.800 26.500H14.700a1.700 1.700 0 0 1-1.700-1.700V12a1.700 1.700 0 0 1 1.700-1.700z" fill="#fff"/>
<rect x="17.700" y="18" width="2.100" height="1.300" fill="#f5ae33"/><rect x="21.800" y="18" width="2.100" height="1.300" fill="#f5ae33"/><rect x="25.900" y="18" width="2.100" height="1.300" fill="#f5ae33"/>
</svg>
<div class="a sidebar"><div class="a sbin">
<svg class="ic" style="left:0px;top:84px;width:24px;height:24px" viewBox="0 0 24 24"><path fill="#e4e4e4" stroke="#e4e4e4" stroke-width="0.3" d="M15.5 14h-.79l-.28-.27C15.41 12.59 16 11.11 16 9.5 16 5.91 13.09 3 9.5 3S3 5.91 3 9.5 5.91 16 9.5 16c1.61 0 3.09-.59 4.23-1.57l.27.28v.79l5 4.99L20.49 19l-4.99-5zm-6 0C7.01 14 5 11.99 5 9.5S7.01 5 9.5 5 14 7.01 14 9.5 11.99 14 9.5 14z"/></svg>
<span class="t s" style="left:28.25px;top:84.80px;font-size:16.5px;letter-spacing:-0.449px;color:#a9abb0;">Search menu...</span>
<svg class="ic" style="left:215px;top:84px;width:24px;height:24px" viewBox="0 0 24 24"><path fill="#e0e0e0" d="M7 10l5 5 5-5z"/></svg>
<div class="a" style="left:0px;top:112px;width:239px;height:1px;background:#d0d0d0;"></div>
<svg class="ic" style="left:10px;top:128px;width:24px;height:24px" viewBox="0 0 24 24"><path fill="#e4e4e4" stroke="#e4e4e4" stroke-width="0.3" d="M6 1V3H5C3.89 3 3 3.89 3 5V19C3 20.1 3.89 21 5 21H11.1C12.36 22.24 14.09 23 16 23C19.87 23 23 19.87 23 16C23 14.09 22.24 12.36 21 11.1V5C21 3.9 20.11 3 19 3H18V1H16V3H8V1M5 5H19V7H5M5 9H19V9.67C18.09 9.24 17.07 9 16 9C12.13 9 9 12.13 9 16C9 17.07 9.24 18.09 9.67 19H5M16 11.15C18.68 11.15 20.85 13.32 20.85 16C20.85 18.68 18.68 20.85 16 20.85C13.32 20.85 11.15 18.68 11.15 16C11.15 13.32 13.32 11.15 16 11.15M15 13V16.69L18.19 18.53L18.94 17.23L16.5 15.82V13Z"/></svg><span class="t" style="left:44.29px;top:130.10px;font-size:13.5px;letter-spacing:-0.389px;color:#e4e4e4;">Scheduled Reports</span><svg class="ic" style="left:10px;top:168px;width:24px;height:24px" viewBox="0 0 24 24"><path fill="#e4e4e4" stroke="#e4e4e4" stroke-width="0.3" d="M22 9.24l-7.19-.62L12 2 9.19 8.63 2 9.24l5.46 4.73L5.82 21 12 16.99 18.18 21l-1.63-7.03L22 9.24zM12 15.4l-3.76 2.27 1-4.28-3.32-2.88 4.38-.38L12 6.1l1.71 4.04 4.38.38-3.32 2.88 1 4.28L12 15.4z"/></svg><span class="t" style="left:43.79px;top:170.10px;font-size:13.5px;letter-spacing:-0.336px;color:#e4e4e4;">My Reports</span><svg class="ic" style="left:205px;top:168px;width:24px;height:24px" viewBox="0 0 24 24"><path fill="#e4e4e4" stroke="#e4e4e4" stroke-width="0.5" d="M7.41 8.59L12 13.17l4.59-4.58L18 10l-6 6-6-6 1.41-1.41z"/></svg><svg class="ic" style="left:10px;top:208px;width:24px;height:24px" viewBox="0 0 24 24"><rect x="2" y="5" width="20" height="14" rx="2" fill="#e4e4e4"/><text x="12" y="15.4" text-anchor="middle" font-family="Liberation Sans, sans-serif" font-weight="bold" font-size="9" fill="#3a3f4a" textLength="15.500" lengthAdjust="spacingAndGlyphs">DEV</text></svg><span class="t" style="left:43.79px;top:210.10px;font-size:13.5px;letter-spacing:-0.374px;color:#e4e4e4;">Development</span><svg class="ic" style="left:205px;top:208px;width:24px;height:24px" viewBox="0 0 24 24"><path fill="#e4e4e4" stroke="#e4e4e4" stroke-width="0.5" d="M7.41 8.59L12 13.17l4.59-4.58L18 10l-6 6-6-6 1.41-1.41z"/></svg><svg class="ic" style="left:10px;top:248px;width:24px;height:24px" viewBox="0 0 24 24"><path fill="#e4e4e4" fill-rule="evenodd" d="M12 13C9.2 13 7 10.8 7 8H9C9 9.7 10.3 11 12 11S15 9.7 15 8H17C17 10.8 14.800 13 12 13M12 3C13.700 3 15 4.300 15 6H9C9 4.300 10.300 3 12 3M19 6H17C17 3.200 14.800 1 12 1S7 3.200 7 6H5C3.900 6 3 6.900 3 8V20C3 21.100 3.900 22 5 22H19C20.100 22 21 21.100 21 20V8C21 6.900 20.100 6 19 6Z"/><circle cx="15.700" cy="16.400" r="6.100" fill="#3a3f4a"/><rect x="15.700" y="16.400" width="8" height="7" fill="#3a3f4a"/><circle cx="15.700" cy="16.400" r="3.400" fill="none" stroke="#e4e4e4" stroke-width="2.100"/><path d="M18.200 18.900l3.800 3.800" stroke="#e4e4e4" stroke-width="2.100" fill="none"/></svg><span class="t" style="left:44.26px;top:250.10px;font-size:13.5px;letter-spacing:-0.686px;color:#e4e4e4;">Orders</span><svg class="ic" style="left:205px;top:248px;width:24px;height:24px" viewBox="0 0 24 24"><path fill="#e4e4e4" stroke="#e4e4e4" stroke-width="0.5" d="M7.41 8.59L12 13.17l4.59-4.58L18 10l-6 6-6-6 1.41-1.41z"/></svg><svg class="ic" style="left:10px;top:288px;width:24px;height:24px" viewBox="0 0 24 24"><path fill="#e4e4e4" stroke="#e4e4e4" stroke-width="0.3" d="M4 10A1 1 0 0 1 3 9A1 1 0 0 1 4 8H12A2 2 0 0 0 14 6A2 2 0 0 0 12 4C11.45 4 10.95 4.22 10.59 4.59C10.2 5 9.56 5 9.17 4.59C8.78 4.2 8.78 3.56 9.17 3.17C9.9 2.45 10.9 2 12 2A4 4 0 0 1 16 6A4 4 0 0 1 12 10H4M19 12A1 1 0 0 0 20 11A1 1 0 0 0 19 10C18.72 10 18.47 10.11 18.29 10.29C17.9 10.68 17.27 10.68 16.88 10.29C16.5 9.9 16.5 9.27 16.88 8.88C17.42 8.34 18.17 8 19 8A3 3 0 0 1 22 11A3 3 0 0 1 19 14H5A1 1 0 0 1 4 13A1 1 0 0 1 5 12H19M18 18H4A1 1 0 0 1 3 17A1 1 0 0 1 4 16H18A3 3 0 0 1 21 19A3 3 0 0 1 18 22C17.17 22 16.42 21.66 15.88 21.12C15.5 20.73 15.5 20.1 15.88 19.71C16.27 19.32 16.9 19.32 17.29 19.71C17.47 19.89 17.72 20 18 20A1 1 0 0 0 19 19A1 1 0 0 0 18 18Z"/></svg><span class="t" style="left:43.79px;top:290.10px;font-size:13.5px;letter-spacing:-0.379px;color:#e4e4e4;">Draft Orders</span><svg class="ic" style="left:205px;top:288px;width:24px;height:24px" viewBox="0 0 24 24"><path fill="#e4e4e4" stroke="#e4e4e4" stroke-width="0.5" d="M7.41 8.59L12 13.17l4.59-4.58L18 10l-6 6-6-6 1.41-1.41z"/></svg><svg class="ic" style="left:10px;top:328px;width:24px;height:24px" viewBox="0 0 24 24"><path fill="#e4e4e4" stroke="#e4e4e4" stroke-width="0.3" d="M18 18.5C18.83 18.5 19.5 17.83 19.5 17C19.5 16.17 18.83 15.5 18 15.5C17.17 15.5 16.5 16.17 16.5 17C16.5 17.83 17.17 18.5 18 18.5M19.5 9.5H17V12H21.46L19.5 9.5M6 18.5C6.83 18.5 7.5 17.83 7.5 17C7.5 16.17 6.83 15.5 6 15.5C5.17 15.5 4.5 16.17 4.5 17C4.5 17.83 5.17 18.5 6 18.5M20 8L23 12V17H21C21 18.66 19.66 20 18 20C16.34 20 15 18.66 15 17H9C9 18.66 7.66 20 6 20C4.34 20 3 18.66 3 17H1V6C1 4.89 1.89 4 3 4H17V8H20M3 6V15H3.76C4.31 14.39 5.11 14 6 14C6.89 14 7.69 14.39 8.24 15H15V6H3Z"/></svg><span class="t" style="left:43.79px;top:330.10px;font-size:13.5px;letter-spacing:-0.106px;color:#e4e4e4;">Fulfillments</span><svg class="ic" style="left:205px;top:328px;width:24px;height:24px" viewBox="0 0 24 24"><path fill="#e4e4e4" stroke="#e4e4e4" stroke-width="0.5" d="M7.41 8.59L12 13.17l4.59-4.58L18 10l-6 6-6-6 1.41-1.41z"/></svg><div class="a" style="left:0px;top:360px;width:239px;height:40px;background:#272c37;"></div><svg class="ic" style="left:10px;top:368px;width:24px;height:24px" viewBox="0 0 24 24"><path fill="#fcc22d" stroke="#fcc22d" stroke-width="0.3" d="M19 6H17C17 3.2 14.8 1 12 1S7 3.2 7 6H5C3.9 6 3 6.9 3 8V20C3 21.1 3.9 22 5 22H19C20.1 22 21 21.1 21 20V8C21 6.9 20.1 6 19 6M12 3C13.7 3 15 4.3 15 6H9C9 4.3 10.3 3 12 3M19 20H5V8H19V20M12 12C10.3 12 9 10.7 9 9H7C7 11.8 9.2 14 12 14S17 11.8 17 9H15C15 10.7 13.7 12 12 12Z"/></svg><span class="t" style="left:44.29px;top:370.10px;font-size:13.5px;letter-spacing:-0.742px;color:#fcc22d;">Sales</span><svg class="ic" style="left:205px;top:368px;width:24px;height:24px" viewBox="0 0 24 24"><path fill="#fcc22d" stroke="#fcc22d" stroke-width="0.5" d="M7.41 15.41L12 10.83l4.59 4.58L18 14l-6-6-6 6z"/></svg><span class="t s" style="left:50.39px;top:410.10px;font-size:13.3px;letter-spacing:-0.406px;color:#c8cacd;">30 Day Summary</span><svg class="ic" style="left:205px;top:408px;width:24px;height:24px" viewBox="0 0 24 24"><path fill="#e4e4e4" stroke="#e4e4e4" stroke-width="0.3" d="M12 8c1.1 0 2-.9 2-2s-.9-2-2-2-2 .9-2 2 .9 2 2 2zm0 2c-1.1 0-2 .9-2 2s.9 2 2 2 2-.9 2-2-.9-2-2-2zm0 6c-1.1 0-2 .9-2 2s.9 2 2 2 2-.9 2-2-.9-2-2-2z"/></svg><span class="t s" style="left:50.87px;top:442.10px;font-size:13.3px;letter-spacing:-0.467px;color:#c8cacd;">Average Order Value Over</span><span class="t s" style="left:50.60px;top:458.10px;font-size:13.3px;letter-spacing:-0.155px;color:#c8cacd;">Time</span><svg class="ic" style="left:205px;top:448px;width:24px;height:24px" viewBox="0 0 24 24"><path fill="#e4e4e4" stroke="#e4e4e4" stroke-width="0.3" d="M12 8c1.1 0 2-.9 2-2s-.9-2-2-2-2 .9-2 2 .9 2 2 2zm0 2c-1.1 0-2 .9-2 2s.9 2 2 2 2-.9 2-2-.9-2-2-2zm0 6c-1.1 0-2 .9-2 2s.9 2 2 2 2-.9 2-2-.9-2-2-2z"/></svg><span class="t s" style="left:49.81px;top:490.10px;font-size:13.3px;letter-spacing:-0.385px;color:#c8cacd;">By Channel</span><svg class="ic" style="left:205px;top:488px;width:24px;height:24px" viewBox="0 0 24 24"><path fill="#e4e4e4" stroke="#e4e4e4" stroke-width="0.3" d="M12 8c1.1 0 2-.9 2-2s-.9-2-2-2-2 .9-2 2 .9 2 2 2zm0 2c-1.1 0-2 .9-2 2s.9 2 2 2 2-.9 2-2-.9-2-2-2zm0 6c-1.1 0-2 .9-2 2s.9 2 2 2 2-.9 2-2-.9-2-2-2z"/></svg><span class="t s" style="left:49.81px;top:530.10px;font-size:13.3px;letter-spacing:-0.154px;color:#c8cacd;">By Collection</span><svg class="ic" style="left:205px;top:528px;width:24px;height:24px" viewBox="0 0 24 24"><path fill="#e4e4e4" stroke="#e4e4e4" stroke-width="0.3" d="M12 8c1.1 0 2-.9 2-2s-.9-2-2-2-2 .9-2 2 .9 2 2 2zm0 2c-1.1 0-2 .9-2 2s.9 2 2 2 2-.9 2-2-.9-2-2-2zm0 6c-1.1 0-2 .9-2 2s.9 2 2 2 2-.9 2-2-.9-2-2-2z"/></svg><span class="t s" style="left:49.81px;top:570.10px;font-size:13.3px;letter-spacing:-0.228px;color:#c8cacd;">By Product</span><svg class="ic" style="left:205px;top:568px;width:24px;height:24px" viewBox="0 0 24 24"><path fill="#e4e4e4" stroke="#e4e4e4" stroke-width="0.3" d="M12 8c1.1 0 2-.9 2-2s-.9-2-2-2-2 .9-2 2 .9 2 2 2zm0 2c-1.1 0-2 .9-2 2s.9 2 2 2 2-.9 2-2-.9-2-2-2zm0 6c-1.1 0-2 .9-2 2s.9 2 2 2 2-.9 2-2-.9-2-2-2z"/></svg><div class="a" style="left:0px;top:600px;width:239px;height:40px;background:#6a6047;"></div><span class="t s" style="left:49.81px;top:610.10px;font-size:13.3px;letter-spacing:-0.164px;color:#fcc22d;">By Product Variant</span><svg class="ic" style="left:205px;top:608px;width:24px;height:24px" viewBox="0 0 24 24"><path fill="#fcc22d" stroke="#fcc22d" stroke-width="0.3" d="M12 8c1.1 0 2-.9 2-2s-.9-2-2-2-2 .9-2 2 .9 2 2 2zm0 2c-1.1 0-2 .9-2 2s.9 2 2 2 2-.9 2-2-.9-2-2-2zm0 6c-1.1 0-2 .9-2 2s.9 2 2 2 2-.9 2-2-.9-2-2-2z"/></svg><span class="t s" style="left:49.81px;top:650.10px;font-size:13.3px;letter-spacing:-0.284px;color:#c8cacd;">By Product Type</span><svg class="ic" style="left:205px;top:648px;width:24px;height:24px" viewBox="0 0 24 24"><path fill="#e4e4e4" stroke="#e4e4e4" stroke-width="0.3" d="M12 8c1.1 0 2-.9 2-2s-.9-2-2-2-2 .9-2 2 .9 2 2 2zm0 2c-1.1 0-2 .9-2 2s.9 2 2 2 2-.9 2-2-.9-2-2-2zm0 6c-1.1 0-2 .9-2 2s.9 2 2 2 2-.9 2-2-.9-2-2-2z"/></svg><span class="t s" style="left:49.81px;top:690.10px;font-size:13.3px;letter-spacing:-0.321px;color:#c8cacd;">By Tags</span><svg class="ic" style="left:205px;top:688px;width:24px;height:24px" viewBox="0 0 24 24"><path fill="#e4e4e4" stroke="#e4e4e4" stroke-width="0.3" d="M12 8c1.1 0 2-.9 2-2s-.9-2-2-2-2 .9-2 2 .9 2 2 2zm0 2c-1.1 0-2 .9-2 2s.9 2 2 2 2-.9 2-2-.9-2-2-2zm0 6c-1.1 0-2 .9-2 2s.9 2 2 2 2-.9 2-2-.9-2-2-2z"/></svg><span class="t s" style="left:49.81px;top:730.10px;font-size:13.3px;letter-spacing:-0.117px;color:#c8cacd;">By Billing Location</span><svg class="ic" style="left:205px;top:728px;width:24px;height:24px" viewBox="0 0 24 24"><path fill="#e4e4e4" stroke="#e4e4e4" stroke-width="0.3" d="M12 8c1.1 0 2-.9 2-2s-.9-2-2-2-2 .9-2 2 .9 2 2 2zm0 2c-1.1 0-2 .9-2 2s.9 2 2 2 2-.9 2-2-.9-2-2-2zm0 6c-1.1 0-2 .9-2 2s.9 2 2 2 2-.9 2-2-.9-2-2-2z"/></svg><span class="t s" style="left:49.81px;top:770.10px;font-size:13.3px;letter-spacing:-0.293px;color:#c8cacd;">By Customer</span><svg class="ic" style="left:205px;top:768px;width:24px;height:24px" viewBox="0 0 24 24"><path fill="#e4e4e4" stroke="#e4e4e4" stroke-width="0.3" d="M12 8c1.1 0 2-.9 2-2s-.9-2-2-2-2 .9-2 2 .9 2 2 2zm0 2c-1.1 0-2 .9-2 2s.9 2 2 2 2-.9 2-2-.9-2-2-2zm0 6c-1.1 0-2 .9-2 2s.9 2 2 2 2-.9 2-2-.9-2-2-2z"/></svg><span class="t s" style="left:49.81px;top:810.10px;font-size:13.3px;letter-spacing:-0.414px;color:#c8cacd;">By Risk Level</span><svg class="ic" style="left:205px;top:808px;width:24px;height:24px" viewBox="0 0 24 24"><path fill="#e4e4e4" stroke="#e4e4e4" stroke-width="0.3" d="M12 8c1.1 0 2-.9 2-2s-.9-2-2-2-2 .9-2 2 .9 2 2 2zm0 2c-1.1 0-2 .9-2 2s.9 2 2 2 2-.9 2-2-.9-2-2-2zm0 6c-1.1 0-2 .9-2 2s.9 2 2 2 2-.9 2-2-.9-2-2-2z"/></svg><span class="t s" style="left:49.81px;top:850.10px;font-size:13.3px;letter-spacing:-0.343px;color:#c8cacd;">By Vendor</span><svg class="ic" style="left:205px;top:848px;width:24px;height:24px" viewBox="0 0 24 24"><path fill="#e4e4e4" stroke="#e4e4e4" stroke-width="0.3" d="M12 8c1.1 0 2-.9 2-2s-.9-2-2-2-2 .9-2 2 .9 2 2 2zm0 2c-1.1 0-2 .9-2 2s.9 2 2 2 2-.9 2-2-.9-2-2-2zm0 6c-1.1 0-2 .9-2 2s.9 2 2 2 2-.9 2-2-.9-2-2-2z"/></svg><span class="t s" style="left:49.81px;top:890.10px;font-size:13.3px;letter-spacing:-0.290px;color:#c8cacd;">By Discount Code</span><svg class="ic" style="left:205px;top:888px;width:24px;height:24px" viewBox="0 0 24 24"><path fill="#e4e4e4" stroke="#e4e4e4" stroke-width="0.3" d="M12 8c1.1 0 2-.9 2-2s-.9-2-2-2-2 .9-2 2 .9 2 2 2zm0 2c-1.1 0-2 .9-2 2s.9 2 2 2 2-.9 2-2-.9-2-2-2zm0 6c-1.1 0-2 .9-2 2s.9 2 2 2 2-.9 2-2-.9-2-2-2z"/></svg><span class="t s" style="left:49.81px;top:930.10px;font-size:13.3px;letter-spacing:-0.353px;color:#c8cacd;">By Checkout Currency</span><svg class="ic" style="left:205px;top:928px;width:24px;height:24px" viewBox="0 0 24 24"><path fill="#e4e4e4" stroke="#e4e4e4" stroke-width="0.3" d="M12 8c1.1 0 2-.9 2-2s-.9-2-2-2-2 .9-2 2 .9 2 2 2zm0 2c-1.1 0-2 .9-2 2s.9 2 2 2 2-.9 2-2-.9-2-2-2zm0 6c-1.1 0-2 .9-2 2s.9 2 2 2 2-.9 2-2-.9-2-2-2z"/></svg><span class="t s" style="left:49.81px;top:970.10px;font-size:13.3px;letter-spacing:-0.420px;color:#c8cacd;">By Source</span><svg class="ic" style="left:205px;top:968px;width:24px;height:24px" viewBox="0 0 24 24"><path fill="#e4e4e4" stroke="#e4e4e4" stroke-width="0.3" d="M12 8c1.1 0 2-.9 2-2s-.9-2-2-2-2 .9-2 2 .9 2 2 2zm0 2c-1.1 0-2 .9-2 2s.9 2 2 2 2-.9 2-2-.9-2-2-2zm0 6c-1.1 0-2 .9-2 2s.9 2 2 2 2-.9 2-2-.9-2-2-2z"/></svg><svg class="ic" style="left:10px;top:1008px;width:24px;height:24px" viewBox="0 0 24 24"><path fill="#e4e4e4" stroke="#e4e4e4" stroke-width="0.3" d="M5.06 3C4.63 3 4.22 3.14 3.84 3.42S3.24 4.06 3.14 4.5L2.11 8.91C1.86 10 2.06 10.92 2.69 11.73C2.81 11.85 2.93 11.97 3.04 12.08V19C3.04 19.5 3.24 20 3.63 20.39C4.03 20.78 4.5 21 5.04 21H19.04C19.54 21 20.03 20.78 20.43 20.39C20.82 20 21.04 19.5 21.04 19V12.08C21.16 11.97 21.28 11.85 21.4 11.73C22.03 10.92 22.22 10 21.97 8.91L20.95 4.5C20.82 4.06 20.57 3.7 20.21 3.42C19.85 3.14 19.45 3 19 3M18.89 4.97L19.97 9.38C20.06 9.81 19.97 10.2 19.69 10.55C19.44 10.86 19.13 11 18.75 11C18.44 11 18.17 10.9 17.95 10.66C17.73 10.43 17.61 10.16 17.58 9.84L16.97 5L18.89 4.97M5.06 5H7.03L6.42 9.84C6.3 10.63 5.91 11 5.25 11C4.84 11 4.53 10.86 4.31 10.55C4.03 10.2 3.94 9.81 4.03 9.38L5.06 5M9.05 5H11V9.7C11 10.05 10.89 10.35 10.64 10.62C10.39 10.88 10.08 11 9.7 11C9.36 11 9.07 10.88 8.84 10.59C8.61 10.3 8.5 10 8.5 9.66V9.5L9.05 5M13 5H14.96L15.5 9.5C15.58 9.92 15.5 10.27 15.21 10.57C14.95 10.87 14.61 11 14.2 11C13.89 11 13.61 10.88 13.36 10.62C13.11 10.35 13 10.05 13 9.7V5M7.45 12.05C8.08 12.65 8.86 13 9.8 13C10.64 13 11.38 12.65 12 12.05C12.69 12.65 13.45 13 14.3 13C15.17 13 15.92 12.65 16.55 12.05C17.11 12.65 17.86 13 18.8 13H19.03V19H5.04V13H5.25C6.16 13 6.89 12.65 7.45 12.05Z"/></svg><span class="t" style="left:43.79px;top:1010.10px;font-size:13.5px;letter-spacing:-0.301px;color:#e4e4e4;">Retail</span><svg class="ic" style="left:205px;top:1008px;width:24px;height:24px" viewBox="0 0 24 24"><path fill="#e4e4e4" stroke="#e4e4e4" stroke-width="0.5" d="M7.41 8.59L12 13.17l4.59-4.58L18 10l-6 6-6-6 1.41-1.41z"/></svg><svg class="ic" style="left:10px;top:1048px;width:24px;height:24px" viewBox="0 0 24 24"><path fill="#e4e4e4" stroke="#e4e4e4" stroke-width="0.3" d="M16 6l2.29 2.29-4.88 4.88-4-4L2 16.59 3.41 18l6-6 4 4 6.3-6.29L22 12V6z"/></svg><span class="t" style="left:43.79px;top:1050.10px;font-size:13.5px;letter-spacing:-0.120px;color:#e4e4e4;">Profit</span><svg class="ic" style="left:205px;top:1048px;width:24px;height:24px" viewBox="0 0 24 24"><path fill="#e4e4e4" stroke="#e4e4e4" stroke-width="0.5" d="M7.41 8.59L12 13.17l4.59-4.58L18 10l-6 6-6-6 1.41-1.41z"/></svg><svg class="ic" style="left:10px;top:1088px;width:24px;height:24px" viewBox="0 0 24 24"><path fill="#e4e4e4" stroke="#e4e4e4" stroke-width="0.3" d="M6 16.5L3 19.44V11H6M11 14.66L9.43 13.32L8 14.64V7H11M16 13L13 16V3H16M18.81 12.81L17 11H22V16L20.21 14.21L13 21.36L9.53 18.34L5.75 22H3L9.47 15.66L13 18.64"/></svg><span class="t" style="left:43.79px;top:1090.10px;font-size:13.5px;letter-spacing:-0.214px;color:#e4e4e4;">Financial</span><svg class="ic" style="left:205px;top:1088px;width:24px;height:24px" viewBox="0 0 24 24"><path fill="#e4e4e4" stroke="#e4e4e4" stroke-width="0.5" d="M7.41 8.59L12 13.17l4.59-4.58L18 10l-6 6-6-6 1.41-1.41z"/></svg>
</div></div>
<div class="a" style="left:239px;top:64px;width:17px;height:1043px;background:#f1f1f1;border-left:1px solid #fff;border-right:1px solid #fff"></div>
<div class="a" style="left:241px;top:81px;width:13px;height:833px;background:#c1c1c1;"></div>
<svg class="ic" style="left:239px;top:64px;width:17px;height:17px" viewBox="0 0 17 17"><path d="M4.700 11.100L8.500 6.800L12.300 11.100z" fill="#a3a3a3"/></svg>
<svg class="ic" style="left:239px;top:1090px;width:17px;height:17px" viewBox="0 0 17 17"><path d="M4.700 6L8.500 10.300L12.300 6z" fill="#505050"/></svg>
<div class="a hdr">
<svg class="ic" style="left:6px;top:20px;width:24px;height:24px" viewBox="0 0 24 24"><path fill="#f0f0f0" d="M3 18h18v-2H3v2zm0-5h18v-2H3v2zm0-7v2h18V6H3z"/></svg>
<svg class="ic" style="left:40px;top:16px;width:32px;height:32px" viewBox="40 16 32 32">
<path d="M43.500 43h25.100v1.800a1.500 1.500 0 0 1-1.500 1.500H45a1.500 1.500 0 0 1-1.500-1.500z" fill="#a64c49"/>
<path d="M41.700 35.100h2.200v2.500h-1.400zM70.400 35.100h-2.200v2.500h1.400z" fill="#a85250"/>
<path d="M41.800 35.800V24.500C41.800 20 48 17.400 56.050 17.400S70.300 20 70.300 24.500V35.800l-1.300.6v6.500a1.200 1.200 0 0 1-1.200 1.200H44.300a1.200 1.200 0 0 1-1.200-1.200V36.400z" fill="#e6e1d8"/>
<ellipse cx="56" cy="31.500" rx="12" ry="11.500" fill="#f1eee7" opacity=".6"/><ellipse cx="56" cy="32" rx="9" ry="9" fill="#f5f2ec" opacity=".6"/>
<rect x="45.100" y="28" width="1.800" height="4.700" fill="#f27d7d"/><rect x="47.400" y="25.200" width="1.800" height="7.500" fill="#f5a25d"/><rect x="49.600" y="22.300" width="1.800" height="10.400" fill="#f5b733"/><rect x="51.800" y="24.400" width="1.700" height="8.300" fill="#2eaa6a"/><rect x="53.900" y="21.500" width="1.700" height="11.200" fill="#3ab0e8"/>
<circle cx="62.350" cy="27.100" r="3.500" fill="none" stroke="#f0555a" stroke-width="2.700"/>
<path d="M58.850 27.100a3.500 3.500 0 0 0 7 0" fill="none" stroke="#1fae70" stroke-width="2.700"/>
<path d="M58.850 27.600a3.500 3.500 0 0 1 .3-2" fill="none" stroke="#f5b733" stroke-width="2.700"/>
<path d="M58.900 28.300a3.500 3.500 0 0 0 1.400 1.800" fill="none" stroke="#2d9fe0" stroke-width="2.700"/>
<path d="M48.100 41.100l5.300-2 5.300-4 5.300 4.500" fill="none" stroke="#2b66b5" stroke-width="1.200"/>
<circle cx="48.100" cy="41.100" r="1.550" fill="#2b66b5"/><circle cx="53.400" cy="39.100" r="1.550" fill="#2b66b5"/><circle cx="58.700" cy="35.100" r="1.550" fill="#2b66b5"/><circle cx="64" cy="39.600" r="1.550" fill="#2b66b5"/>
</svg>
<span class="t g" style="left:83.76px;top:22.20px;font-size:20px;letter-spacing:-0.609px;font-weight:bold;color:#ffffff;">Report Toaster</span>
<svg class="ic" style="left:1694px;top:13px;width:36px;height:36px" viewBox="0 0 24 24"><path fill="#e0e0e0" d="M12 2C6.48 2 2 6.48 2 12s4.48 10 10 10 10-4.48 10-10S17.52 2 12 2zm0 3c1.66 0 3 1.34 3 3s-1.34 3-3 3-3-1.34-3-3 1.34-3 3-3zm0 14.2c-2.5 0-4.71-1.28-6-3.22.03-1.99 4-3.08 6-3.08 1.99 0 5.97 1.09 6 3.08-1.29 1.94-3.5 3.22-6 3.22z"/></svg>
</div>
<div class="a" style="left:1740px;top:0;width:17px;height:1107px;background:#f1f1f1;border-left:1px solid #fff"></div>
<div class="a" style="left:1742px;top:66px;width:13px;height:1024px;background:#c1c1c1;"></div>
<svg class="ic" style="left:1740px;top:0px;width:17px;height:17px" viewBox="0 0 17 17"><path d="M4.700 11.100L8.500 6.800L12.300 11.100z" fill="#505050"/></svg>
<svg class="ic" style="left:1740px;top:1090px;width:17px;height:17px" viewBox="0 0 17 17"><path d="M4.700 6L8.500 10.300L12.300 6z" fill="#a3a3a3"/></svg>
</body></html>
